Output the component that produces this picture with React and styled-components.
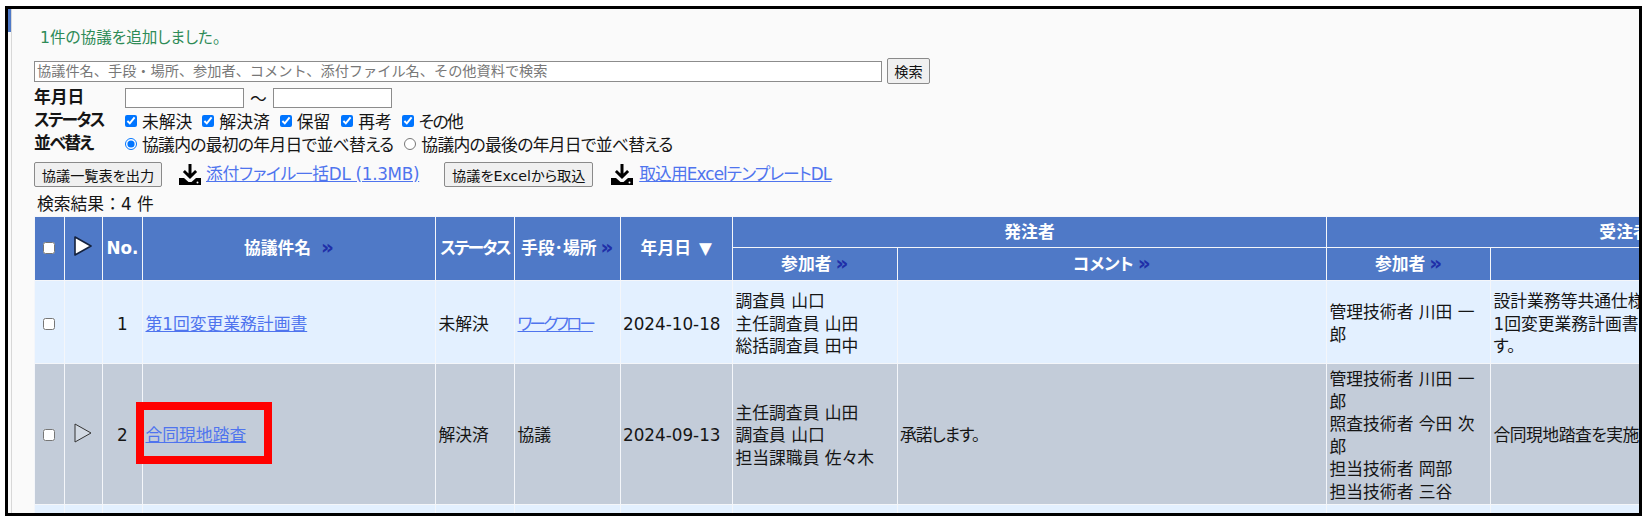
import React from 'react';
import styled, { createGlobalStyle } from 'styled-components';

const GlobalStyle = createGlobalStyle`
  html, body {
    margin: 0;
    padding: 0;
    background: #fff;
    overflow: hidden;
  }
  body {
    font-family: "DejaVu Sans", "Noto Sans CJK JP", sans-serif;
    font-size: 16.8px;
    font-feature-settings: "palt";
    color: #151515;
  }
`;

const Frame = styled.div`
  box-sizing: border-box;
  width: 1637px;
  height: 510px;
  margin: 6px 0 0 5px;
  border: 3px solid #000;
  background: #fafafa;
  display: flex;
  overflow: hidden;
`;

const Rail = styled.div`
  flex: none;
  width: 4px;
  border-right: 1px solid #d8d8d8;
  box-sizing: border-box;
`;

const RailMark = styled.div`
  height: 23px;
  background: #4f79c7;
`;

const Content = styled.div`
  flex: none;
  width: 1900px;
  padding: 17px 0 0 22px;
  box-sizing: border-box;
`;

const Message = styled.div`
  height: 24px;
  line-height: 24px;
  padding-left: 6px;
  font-size: 15.6px;
  color: #2e8b57;
`;

const SearchRow = styled.div`
  display: flex;
  align-items: center;
  gap: 5px;
  height: 26px;
  margin-top: 8px;
`;

const SearchInput = styled.input`
  box-sizing: border-box;
  width: 848px;
  height: 21px;
  padding: 0 2px;
  border: 1.5px solid #8c8c8c;
  background: #fff;
  font-family: inherit;
  font-size: 14.2px;
  &::placeholder {
    color: #777;
  }
`;

const Button = styled.button`
  box-sizing: border-box;
  height: ${props => props.$height || 25}px;
  width: ${props => props.$width}px;
  padding: 0;
  border: 1.5px solid #8a8a8a;
  border-radius: 2px;
  background: #f0f0f0;
  color: #111;
  font-family: inherit;
  font-feature-settings: "palt";
  font-size: 14.2px;
  white-space: nowrap;
`;

const Filters = styled.div`
  display: grid;
  grid-template-columns: 91px 1fr;
  grid-auto-rows: 23px;
  margin-top: 2px;
  align-items: center;
`;

const FilterLabel = styled.div`
  font-weight: 700;
  line-height: 23px;
  letter-spacing: ${props => props.$spacing || 0}px;
`;

const FilterBody = styled.div`
  display: flex;
  align-items: center;
  white-space: nowrap;
`;

const DateInput = styled.input`
  box-sizing: border-box;
  width: 119px;
  height: 20px;
  border: 1.5px solid #8c8c8c;
  background: #fff;
`;

const Tilde = styled.span`
  width: 29px;
  text-align: center;
`;

const Choice = styled.label`
  display: flex;
  align-items: center;
  gap: 5px;
  margin-right: ${props => props.$gap || 10}px;
  letter-spacing: ${props => props.$spacing || 0}px;
`;

const Tick = styled.input`
  width: 12px;
  height: 12px;
  margin: 0;
`;

const ActionRow = styled.div`
  display: flex;
  align-items: center;
  height: 25px;
  margin-top: 7px;
`;

const DownloadLink = styled.a`
  display: flex;
  align-items: center;
  gap: ${props => props.$iconGap}px;
  margin-left: ${props => props.$lead}px;
  margin-right: ${props => props.$gap || 0}px;
  color: #4f74ee;
  white-space: nowrap;
  letter-spacing: ${props => props.$spacing || 0}px;
`;

const LinkText = styled.span`
  text-decoration: underline;
  position: relative;
  top: -2px;
`;

const ResultCount = styled.div`
  height: 22px;
  line-height: 22px;
  margin: 6px 0 1px;
  padding-left: 3px;
  font-feature-settings: normal;
`;

const Table = styled.table`
  table-layout: fixed;
  border-collapse: collapse;
  width: 1888px;
  margin-left: -0.5px;
  font-size: 16.8px;
  line-height: 22.6px;
`;

const Th = styled.th`
  height: ${props => props.$height}px;
  padding: 0;
  border: 1.3px solid #f4f6fa;
  background: #4f79c7;
  color: #fff;
  font-weight: 700;
  text-align: center;
  white-space: nowrap;
  letter-spacing: ${props => props.$spacing || 0}px;
`;

const Td = styled.td`
  height: ${props => props.$height}px;
  padding: 4px 3px 0 2.5px;
  box-sizing: border-box;
  border: 1.3px solid #f4f6fa;
  background: ${props => (props.$shade ? '#c3ccd9' : '#e3f0ff')};
  text-align: ${props => props.$align || 'left'};
  vertical-align: middle;
  word-break: break-all;
  letter-spacing: ${props => props.$spacing || 0}px;
`;

const More = styled.span`
  color: #1f2fa8;
  font-size: 20px;
  line-height: 0;
  letter-spacing: 0;
  margin-left: ${props => props.$gap || 4}px;
`;

const Sort = styled.span`
  margin-left: 8px;
`;

const RowLink = styled.a`
  color: #4f74ee;
  text-decoration: underline;
  letter-spacing: ${props => props.$spacing || 0}px;
`;

const Highlight = styled.span`
  position: relative;
  display: inline-block;
`;

const RedBox = styled.span`
  position: absolute;
  left: -10px;
  right: -26px;
  top: -22px;
  bottom: -17px;
  border: 8px solid #ff0000;
`;

const DownloadIcon = () => (
  <svg width="22" height="21" viewBox="0 0 22 21">
    <path d="M9.5 0h3v9.5l3.6-3.6 2 2L11 15 3.9 7.9l2-2 3.6 3.6z" fill="#000" />
    <path d="M0 14h5l4.5 4h3l4.5-4h5v7H0z" fill="#000" />
    <circle cx="18.5" cy="18.5" r="1" fill="#fff" />
  </svg>
);

const Triangle = ({ fill, stroke, width }) => (
  <svg width="20" height="22" viewBox="0 0 20 22">
    <path d="M2 2l16 9-16 9z" fill={fill} stroke={stroke} strokeWidth={width} strokeLinejoin="round" />
  </svg>
);

const statuses = [
  ['未解決', 10, 0],
  ['解決済', 10, 0],
  ['保留', 11, 0],
  ['再考', 10, 0],
  ['その他', 0, -1.6],
];

const Lines = ({ items }) => items.map((line, i) => <div key={i}>{line}</div>);

const App = () => (
  <>
    <GlobalStyle />
    <Frame>
      <Rail>
        <RailMark />
      </Rail>
      <Content>
        <Message>1件の協議を追加しました。</Message>
        <SearchRow>
          <SearchInput placeholder="協議件名、手段・場所、参加者、コメント、添付ファイル名、その他資料で検索" />
          <Button $width={43} $height={26}>検索</Button>
        </SearchRow>
        <Filters>
          <FilterLabel>年月日</FilterLabel>
          <FilterBody>
            <DateInput />
            <Tilde>～</Tilde>
            <DateInput />
          </FilterBody>
          <FilterLabel $spacing={-1.8}>ステータス</FilterLabel>
          <FilterBody>
            {statuses.map(([label, gap, spacing]) => (
              <Choice key={label} $gap={gap} $spacing={spacing}>
                <Tick type="checkbox" defaultChecked />
                {label}
              </Choice>
            ))}
          </FilterBody>
          <FilterLabel $spacing={-1.5}>並べ替え</FilterLabel>
          <FilterBody>
            <Choice $gap={11} $spacing={-0.7}>
              <Tick type="radio" name="sort" defaultChecked />
              協議内の最初の年月日で並べ替える
            </Choice>
            <Choice $spacing={-0.7}>
              <Tick type="radio" name="sort" />
              協議内の最後の年月日で並べ替える
            </Choice>
          </FilterBody>
        </Filters>
        <ActionRow>
          <Button $width={128}>協議一覧表を出力</Button>
          <DownloadLink $lead={17} $iconGap={5} $gap={25} $spacing={-0.3}>
            <DownloadIcon />
            <LinkText>添付ファイル一括DL (1.3MB)</LinkText>
          </DownloadLink>
          <Button $width={149}>協議をExcelから取込</Button>
          <DownloadLink $lead={18} $iconGap={6} $spacing={-0.9}>
            <DownloadIcon />
            <LinkText>取込用ExcelテンプレートDL</LinkText>
          </DownloadLink>
        </ActionRow>
        <ResultCount>検索結果：4 件</ResultCount>
        <Table>
          <colgroup>
            <col style={{ width: 30 }} />
            <col style={{ width: 38.5 }} />
            <col style={{ width: 40 }} />
            <col style={{ width: 293 }} />
            <col style={{ width: 79 }} />
            <col style={{ width: 105.5 }} />
            <col style={{ width: 112.5 }} />
            <col style={{ width: 164.5 }} />
            <col style={{ width: 429.5 }} />
            <col style={{ width: 164 }} />
            <col style={{ width: 432 }} />
          </colgroup>
          <thead>
            <tr>
              <Th rowSpan={2}><Tick type="checkbox" /></Th>
              <Th rowSpan={2}><Triangle fill="#fff" stroke="#14213d" width={1.6} /></Th>
              <Th rowSpan={2}>No.</Th>
              <Th rowSpan={2}>協議件名<More $gap={10}>»</More></Th>
              <Th rowSpan={2} $spacing={-1.8}>ステータス</Th>
              <Th rowSpan={2}>手段･場所<More>»</More></Th>
              <Th rowSpan={2}>年月日<Sort>▼</Sort></Th>
              <Th colSpan={2} $height={30}>発注者</Th>
              <Th colSpan={2} $height={30}>受注者</Th>
            </tr>
            <tr>
              <Th $height={32}>参加者<More>»</More></Th>
              <Th $height={32}>コメント<More>»</More></Th>
              <Th $height={32}>参加者<More>»</More></Th>
              <Th $height={32}>コメント<More>»</More></Th>
            </tr>
          </thead>
          <tbody>
            <tr>
              <Td $height={83} $align="center"><Tick type="checkbox" /></Td>
              <Td />
              <Td $align="center">1</Td>
              <Td><RowLink>第1回変更業務計画書</RowLink></Td>
              <Td>未解決</Td>
              <Td><RowLink $spacing={-3}>ワークフロー</RowLink></Td>
              <Td>2024-10-18</Td>
              <Td><Lines items={['調査員 山口', '主任調査員 山田', '総括調査員 田中']} /></Td>
              <Td />
              <Td>管理技術者 川田 一郎</Td>
              <Td>
                <Lines items={['設計業務等共通仕様書に基づき、第', '1回変更業務計画書を提出しま', 'す。']} />
              </Td>
            </tr>
            <tr>
              <Td $shade $height={140} $align="center"><Tick type="checkbox" /></Td>
              <Td $shade $align="center"><Triangle fill="#d3dae4" stroke="#333" width={1} /></Td>
              <Td $shade $align="center">2</Td>
              <Td $shade>
                <Highlight>
                  <RowLink>合同現地踏査</RowLink>
                  <RedBox />
                </Highlight>
              </Td>
              <Td $shade>解決済</Td>
              <Td $shade>協議</Td>
              <Td $shade>2024-09-13</Td>
              <Td $shade><Lines items={['主任調査員 山田', '調査員 山口', '担当課職員 佐々木']} /></Td>
              <Td $shade $spacing={-1}>承諾します。</Td>
              <Td $shade>
                <Lines items={['管理技術者 川田 一郎', '照査技術者 今田 次郎', '担当技術者 岡部', '担当技術者 三谷']} />
              </Td>
              <Td $shade $spacing={-0.5}>合同現地踏査を実施しました。</Td>
            </tr>
            <tr>
              <Td $height={84} $align="center"><Tick type="checkbox" /></Td>
              <Td />
              <Td $align="center">3</Td>
              <Td />
              <Td />
              <Td />
              <Td />
              <Td />
              <Td />
              <Td />
              <Td />
            </tr>
          </tbody>
        </Table>
      </Content>
    </Frame>
  </>
);

export default App;
